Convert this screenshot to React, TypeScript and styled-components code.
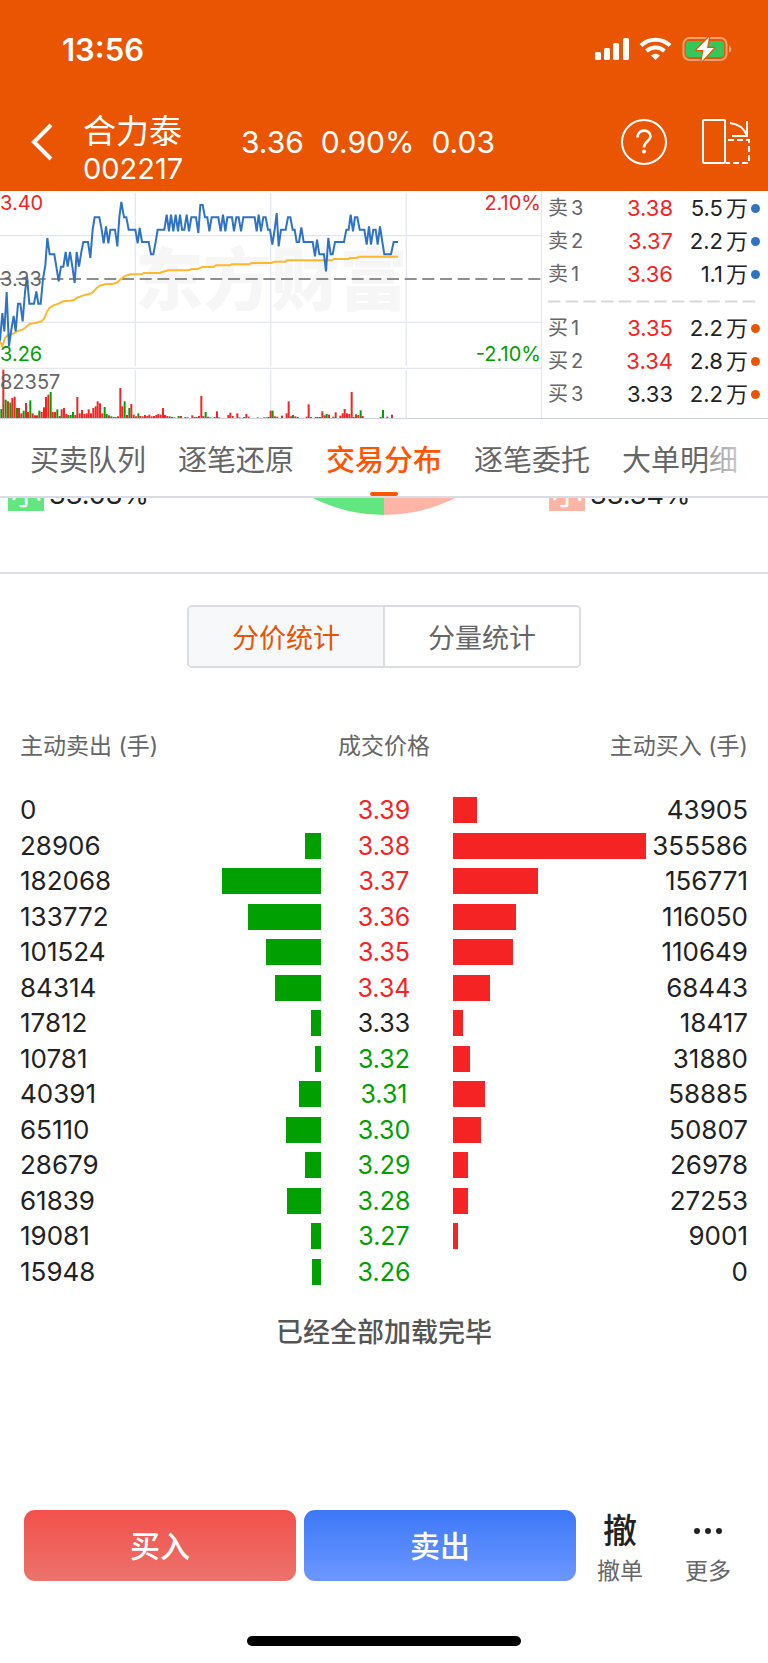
import React from "react";
import styled, { createGlobalStyle } from "styled-components";

const c = {
  brand: "#ea5504",
  active: "#ff5500",
  red: "#f52323",
  green: "#00a000",
  ink: "#222222",
  grey: "#666666",
  line: "#d9dce3",
  grid: "#e4e7ef",
  blue: "#2e73c4",
};

const Global = createGlobalStyle`
  * { box-sizing: border-box; }
  body {
    margin: 0;
    background: #ffffff;
    color: ${c.ink};
    font-family: Inter, "Noto Sans CJK SC", sans-serif;
  }
  button {
    font: inherit;
    color: inherit;
    border: 0;
    padding: 0;
    background: none;
    cursor: pointer;
  }
`;

const Page = styled.div`
  display: flex;
  flex-direction: column;
  min-height: 100vh;
  overflow: hidden;
`;

/* ---------- header ---------- */

const Header = styled.header`
  background: ${c.brand};
  color: #ffffff;
  height: 191px;
`;

const StatusBar = styled.div`
  display: flex;
  justify-content: space-between;
  align-items: center;
  height: 98px;
  padding: 0 36px 0 62px;
`;

const Clock = styled.time`
  font-size: 31px;
  font-weight: 600;
`;

const StatusIcons = styled.div`
  display: flex;
  align-items: center;
`;

const TitleBar = styled.div`
  display: flex;
  align-items: center;
  height: 88px;
  padding: 0 18px 0 30px;
`;

const BackButton = styled.button`
  display: flex;
  width: 53px;
`;

const StockName = styled.h1`
  display: flex;
  flex-direction: column;
  width: 158px;
  margin: 13px 0 0;
  font-weight: 400;
`;

const NameText = styled.span`
  font-size: 33px;
  line-height: 40px;
`;

const CodeText = styled.span`
  font-size: 29px;
  line-height: 36px;
`;

const Quote = styled.div`
  display: flex;
  flex: 1;
  gap: 17px;
  font-size: 30px;
`;

const HeaderActions = styled.div`
  display: flex;
  gap: 35px;
`;

const IconButton = styled.button`
  display: flex;
`;

/* ---------- chart and order book ---------- */

const Market = styled.section`
  display: flex;
  height: 228px;
  border-bottom: 1px solid #ced2da;
`;

const Chart = styled.div`
  position: relative;
  flex: 1;
  border-right: 1px solid ${c.grid};
`;

const ChartDrawing = styled.svg`
  position: absolute;
  inset: 0;
  width: 100%;
  height: 100%;
`;

const Watermark = styled.div`
  position: absolute;
  left: 25%;
  top: 53px;
  width: 50%;
  text-align: center;
  white-space: nowrap;
  font-size: 68px;
  line-height: 72px;
  font-weight: 900;
  color: #f6f6f6;
`;

const ChartLabel = styled.span<{ $top: number; $right?: boolean; $color: string }>`
  position: absolute;
  top: ${(p) => p.$top}px;
  ${(p) => (p.$right ? "right: 0;" : "left: 0;")}
  font-size: 20px;
  line-height: 24px;
  color: ${(p) => p.$color};
`;

const OrderBook = styled.div`
  width: 226px;
  padding: 0 8px 0 6px;
`;

const BookTable = styled.table`
  width: 100%;
  border-collapse: collapse;
  font-size: 22px;
  line-height: 33px;

  tbody + tbody::before {
    content: "";
    display: block;
    height: 21px;
  }
  th, td { padding: 0; text-align: right; font-weight: 400; }
  th { text-align: left; color: ${c.grey}; font-size: 20px; }
`;

const Pair = styled.span`
  display: inline-flex;
  gap: 3px;
`;

const BookWrap = styled.div`
  position: relative;
  padding-top: 1px;
`;

const BookDivider = styled.svg`
  position: absolute;
  left: 0;
  top: 109px;
  width: 208px;
  height: 3px;
`;

const BookPrice = styled.td<{ $color: string }>`
  width: 72px;
  color: ${(p) => p.$color};
`;

const BookVolume = styled.td`
  width: 75px;
`;

const DotCell = styled.td`
  width: 12px;
`;

const Dot = styled.i<{ $color: string }>`
  display: block;
  width: 9px;
  height: 9px;
  margin-left: auto;
  border-radius: 50%;
  background: ${(p) => p.$color};
`;

/* ---------- tabs ---------- */

const Tabs = styled.nav`
  position: relative;
  display: flex;
  gap: 32px;
  height: 79px;
  padding: 0 0 0 30px;
  overflow: hidden;
  border-bottom: 2px solid ${c.line};

  &::after {
    content: "";
    position: absolute;
    top: 0;
    right: 0;
    width: 60px;
    height: 100%;
    background: linear-gradient(to right, rgba(255, 255, 255, 0.3), #ffffff);
  }
`;

const Tab = styled.button<{ $active?: boolean }>`
  position: relative;
  flex: none;
  font-size: 29px;
  white-space: nowrap;
  color: ${(p) => (p.$active ? c.active : c.grey)};
  font-weight: ${(p) => (p.$active ? 500 : 400)};

  &::after {
    content: "";
    display: ${(p) => (p.$active ? "block" : "none")};
    position: absolute;
    bottom: 0;
    left: 50%;
    width: 28px;
    height: 4px;
    margin-left: -14px;
    border-radius: 2px;
    background: ${c.active};
  }
`;

/* ---------- share summary, scrolled under the tabs ---------- */

const Summary = styled.section`
  height: 76px;
  overflow: hidden;
  border-bottom: 2px solid ${c.line};
`;

const SummaryRow = styled.div`
  display: grid;
  grid-template-columns: 1fr 314px 1fr;
  align-items: end;
  height: 314px;
  margin-top: -297px;
`;

const Share = styled.div`
  display: flex;
  align-items: flex-end;
  gap: 5px;
  padding: 0 0 4px 8px;
  font-size: 27px;
  line-height: 33px;
`;

const SizeBadge = styled.span<{ $color: string }>`
  width: 36px;
  height: 36px;
  background: ${(p) => p.$color};
  color: #ffffff;
  font-size: 30px;
  line-height: 36px;
  text-align: center;
`;

const Pie = styled.svg`
  width: 314px;
  height: 314px;
`;

/* ---------- distribution ---------- */

const Segmented = styled.div`
  display: flex;
  width: 394px;
  height: 63px;
  margin: 31px auto 0;
  border: 2px solid ${c.line};
  border-radius: 5px;
  overflow: hidden;
`;

const Segment = styled.button<{ $active?: boolean }>`
  flex: 1;
  font-size: 27px;
  color: ${(p) => (p.$active ? c.brand : c.grey)};
  background: ${(p) => (p.$active ? "#f6f8fa" : "#ffffff")};

  & + & { border-left: 2px solid ${c.line}; }
`;

const Distribution = styled.table`
  width: calc(100% - 40px);
  margin: 61px 20px 0;
  table-layout: fixed;
  border-collapse: collapse;
  font-size: 26px;

  th, td { padding: 0; font-weight: 400; white-space: nowrap; }
  th { font-size: 23px; color: ${c.grey}; line-height: 34px; padding-bottom: 29px; }
  tbody tr:nth-child(odd) { height: 36px; }
  tbody tr:nth-child(even) { height: 35px; }
  tbody td { line-height: 32px; }
`;

const Cell = styled.td<{ $align: "left" | "right" }>`
  text-align: ${(p) => p.$align};
`;

const HeadCell = styled.th<{ $align: "left" | "center" | "right" }>`
  text-align: ${(p) => p.$align};
  && { padding-right: ${(p) => (p.$align === "center" ? 6 : 0)}px; }
`;

const PriceCell = styled.td<{ $color: string }>`
  color: ${(p) => p.$color};
  font-size: 25px;
  text-align: center;
  && { padding-right: 6px; }
`;

const Bar = styled.div<{ $sell?: boolean }>`
  height: 26px;
  margin-left: ${(p) => (p.$sell ? "auto" : "0")};
  background: ${(p) => (p.$sell ? c.green : c.red)};
`;

const EndNote = styled.p`
  margin: 24px 0 0;
  text-align: center;
  font-size: 27px;
  line-height: 40px;
  font-weight: 500;
  color: #555555;
`;

/* ---------- bottom bar ---------- */

const Footer = styled.footer`
  margin-top: auto;
`;

const Actions = styled.div`
  display: flex;
  align-items: flex-start;
  gap: 8px;
  padding: 0 24px;
`;

const TradeButton = styled.button<{ $from: string; $to: string }>`
  flex: 1;
  height: 71px;
  padding-bottom: 3px;
  border-radius: 11px;
  background: linear-gradient(${(p) => p.$from}, ${(p) => p.$to});
  color: #ffffff;
  font-size: 30px;
  font-weight: 500;
`;

const SmallActions = styled.div`
  display: flex;
  gap: 16px;
`;

const SmallAction = styled.button`
  display: flex;
  flex-direction: column;
  align-items: center;
  width: 72px;
  font-size: 23px;
  line-height: 30px;
  color: ${c.grey};
`;

const ActionGlyph = styled.span`
  display: flex;
  align-items: center;
  height: 46px;
  padding-bottom: 4px;
  font-size: 34px;
  font-weight: 500;
  color: ${c.ink};
`;

const HomeIndicator = styled.div`
  width: 274px;
  height: 10px;
  margin: 50px auto 17px;
  border-radius: 5px;
  background: #000000;
`;

/* ---------- data ---------- */

const priceLine =
  "0,458 7,375 13,430 20,312 27,475 34,425 41,384 47,430 54,347 61,347 68,400 75,312 81,265 88,347 102,347 109,310 115,347 122,347 129,273 136,232 142,150 149,199 163,199 169,236 176,280 183,236 190,236 197,192 203,236 210,192 217,236 224,285 230,192 237,236 244,192 250,162 264,162 271,210 278,125 284,88 298,88 305,125 311,166 318,115 325,166 331,125 345,125 352,175 358,88 364,42 372,88 379,88 386,125 406,125 413,166 419,120 426,162 446,162 453,199 460,199 467,162 473,125 493,125 500,80 507,130 513,80 520,130 527,80 534,130 540,80 546,125 553,125 560,80 567,130 574,88 588,88 595,135 601,51 608,51 615,88 622,88 628,130 635,88 655,88 662,130 669,80 676,130 682,88 696,88 702,130 709,88 716,88 723,130 730,88 764,88 770,130 776,80 783,130 790,88 797,88 804,125 810,125 817,170 824,125 830,75 836,175 843,125 857,125 864,88 871,88 878,125 884,125 890,162 897,162 904,118 911,162 938,162 945,205 951,155 958,199 972,199 978,250 985,150 992,199 998,199 1005,162 1032,162 1039,125 1046,125 1052,80 1059,130 1065,88 1072,88 1079,125 1093,125 1100,170 1107,115 1113,170 1120,125 1127,125 1133,170 1140,115 1147,162 1153,199 1173,199 1181,162 1194,162";

const averageLine =
  "0,460 7,475 15,450 25,440 40,437 55,428 68,425 90,407 105,405 125,400 133,390 140,373 148,360 160,352 176,347 190,340 210,338 222,336 230,330 250,322 275,316 290,300 300,293 318,288 338,288 352,283 362,273 372,266 390,259 425,259 432,255 480,255 487,252 505,247 565,247 575,243 595,243 605,237 640,237 648,232 690,232 695,229 748,229 755,225 815,225 822,221 855,221 862,217 995,217 1002,213 1045,213 1050,210 1070,210 1078,206 1194,206";

/* x:height, with a trailing g for minutes that closed down */
const volumes =
  "4:27g 10:145 17:55g 24:50 31:46g 37:60 44:64 51:30g 57:30 64:14 71:22g 78:45 84:18 91:53g 98:14 105:8 111:8 118:22g 125:18 132:32 138:63 145:70 152:78g 158:18 165:18 172:26g 179:6g 185:26 192:30 199:12 205:9g 212:9g 219:18g 226:9 232:63 239:14 246:24 253:12 260:14 266:26 273:14 280:30 287:35 293:50 300:44 307:14 314:33g 320:12g 327:8 334:5g 341:3 347:3 354:5 361:90 367:35 374:50g 381:9 388:30g 394:42 401:10 408:5 415:14g 421:6 428:5 435:9 442:6 448:10 455:5 462:6 469:9 475:12 482:10 489:30 495:9 502:6 509:5g 516:3g 523:2 536:6g 543:6 556:3 563:2 577:8 584:3 590:3 597:6 604:66 610:6 617:18g 624:4 631:2 644:3 651:20 658:2 685:9 691:16 698:6 712:14 719:2 732:3 739:12 746:4 773:2g 793:2 800:2 806:3g 812:22 818:22g 825:5 832:4 846:7 860:14 866:50 873:5 879:9g 886:5 893:3g 920:4 926:41 933:3 947:3g 953:3 960:3 967:20 974:8 980:12g 987:10 1000:4 1007:17 1021:7 1028:14 1034:27 1041:14 1048:12 1055:78 1061:3 1068:11 1075:9 1082:23g 1088:6 1142:3g 1149:24g 1162:4 1176:10"
    .split(" ")
    .map((item) => {
      const [x, h] = item.split(":");
      return { x: Number(x), h: parseInt(h, 10), down: h.endsWith("g") };
    });

const asks = [
  ["卖", "3", "3.38", "5.5"],
  ["卖", "2", "3.37", "2.2"],
  ["卖", "1", "3.36", "1.1"],
];
const bids = [
  ["买", "1", "3.35", "2.2"],
  ["买", "2", "3.34", "2.8"],
  ["买", "3", "3.33", "2.2"],
];

const tabs = ["买卖队列", "逐笔还原", "交易分布", "逐笔委托", "大单明细"];

const rows: [number, string, number][] = [
  [0, "3.39", 43905],
  [28906, "3.38", 355586],
  [182068, "3.37", 156771],
  [133772, "3.36", 116050],
  [101524, "3.35", 110649],
  [84314, "3.34", 68443],
  [17812, "3.33", 18417],
  [10781, "3.32", 31880],
  [40391, "3.31", 58885],
  [65110, "3.30", 50807],
  [28679, "3.29", 26978],
  [61839, "3.28", 27253],
  [19081, "3.27", 9001],
  [15948, "3.26", 0],
];

const maxVolume = Math.max(...rows.flatMap(([sell, , buy]) => [sell, buy]));
const share = (v: number) => `${(v / maxVolume) * 100}%`;

const priceColor = (price: string) => {
  const p = Number(price);
  return p > 3.33 ? c.red : p < 3.33 ? c.green : c.ink;
};

/* ---------- parts ---------- */

const SystemIcons = () => (
  <svg width="137" height="28" viewBox="0 0 137 28" fill="#ffffff" role="img" aria-label="信号、无线网络、充电中">
    <rect x="0" y="17" width="6" height="8" rx="1.5" />
    <rect x="9" y="13" width="6" height="12" rx="1.5" />
    <rect x="18" y="8" width="6" height="17" rx="1.5" />
    <rect x="28" y="3" width="6" height="22" rx="1.5" />
    <g fill="none" stroke="#ffffff" strokeWidth="4">
      <path d="M46 10.5 A21 21 0 0 1 75 10.5" />
      <path d="M51.5 16 A13 13 0 0 1 69.5 16" />
    </g>
    <path d="M56 20.5 A7 7 0 0 1 65 20.5 L60.5 25 Z" />
    <rect x="88.5" y="3" width="43" height="22" rx="6" fill="none" stroke="#ffffff" strokeOpacity="0.45" strokeWidth="2" />
    <rect x="91" y="6" width="38" height="16" rx="3" fill="#34c759" />
    <path d="M134 10.5 C137 11.5 137 16.5 134 17.5 Z" fillOpacity="0.5" />
    <path
      d="M114 2 L101.5 15 H108.5 L106.5 26.5 L119 13 H112 Z"
      stroke={c.brand}
      strokeWidth="2.4"
      paintOrder="stroke"
      strokeLinejoin="round"
    />
  </svg>
);

const BackIcon = () => (
  <svg width="24" height="38" viewBox="0 0 24 38" fill="none" stroke="#ffffff" strokeWidth="4">
    <path d="M21 2 L4 19 L21 36" />
  </svg>
);

const HelpIcon = () => (
  <svg width="46" height="46" viewBox="0 0 46 46" fill="none" stroke="#ffffff" strokeWidth="2">
    <circle cx="23" cy="23" r="22" />
    <path d="M16.5 18.5 C16.5 9.5 29.5 9.5 29.5 17.5 C29.5 22.5 23 22 23 28.5" strokeWidth="2.6" />
    <circle cx="23" cy="32.5" r="2" fill="#ffffff" stroke="none" />
  </svg>
);

const RotateIcon = () => (
  <svg width="48" height="46" viewBox="0 0 48 46" fill="none" stroke="#ffffff" strokeWidth="2">
    <rect x="1" y="1" width="22" height="43" rx="1" />
    <path d="M28 4 C36 5 42 9 44.5 16" />
    <path d="M45 2 V17 H30" />
    <path d="M26 21 H47 V44 H24" strokeDasharray="6 3" />
  </svg>
);

const BookSide = ({ data, dot }: { data: string[][]; dot: string }) => (
  <tbody>
    {data.map(([side, level, price, volume]) => (
      <tr key={level}>
        <th scope="row"><Pair><span>{side}</span><span>{level}</span></Pair></th>
        <BookPrice $color={priceColor(price)}>{price}</BookPrice>
        <BookVolume><Pair><span>{volume}</span><span>万</span></Pair></BookVolume>
        <DotCell><Dot $color={dot} /></DotCell>
      </tr>
    ))}
  </tbody>
);

const IntradayChart = () => (
  <Chart>
    <Watermark aria-hidden>东方财富</Watermark>
    <ChartDrawing viewBox="0 9 1623 681" preserveAspectRatio="none" fill="none">
      <g stroke={c.grid} strokeWidth="4">
        <path d="M0 143 H1623 M0 403 H1623 M0 541 H1623" />
        <path d="M406 14 V534 M406 546 V690 M812 14 V534 M812 546 V690 M1219 14 V534 M1219 546 V690" />
      </g>
      <path d="M-5 273 H1623" stroke="#6a6a6a" strokeWidth="4" strokeDasharray="36 17" />
      {volumes.map((v) => (
        <rect key={v.x} x={v.x - 3} y={690 - v.h} width="6" height={v.h} fill={v.down ? c.green : c.red} />
      ))}
      <polyline points={averageLine} stroke="#ffb72e" strokeWidth="6" />
      <polyline points={priceLine} stroke={c.blue} strokeWidth="6" />
    </ChartDrawing>
    <ChartLabel $top={0} $color={c.red}>3.40</ChartLabel>
    <ChartLabel $top={76} $color={c.grey}>3.33</ChartLabel>
    <ChartLabel $top={151} $color={c.green}>3.26</ChartLabel>
    <ChartLabel $top={179} $color={c.grey}>82357</ChartLabel>
    <ChartLabel $top={0} $right $color={c.red}>2.10%</ChartLabel>
    <ChartLabel $top={151} $right $color={c.green}>-2.10%</ChartLabel>
  </Chart>
);

export default function App() {
  return (
    <>
      <Global />
      <Page>
        <Header>
          <StatusBar>
            <Clock>13:56</Clock>
            <StatusIcons><SystemIcons /></StatusIcons>
          </StatusBar>
          <TitleBar>
            <BackButton aria-label="返回"><BackIcon /></BackButton>
            <StockName>
              <NameText>合力泰</NameText>
              <CodeText>002217</CodeText>
            </StockName>
            <Quote>
              <span>3.36</span>
              <span>0.90%</span>
              <span>0.03</span>
            </Quote>
            <HeaderActions>
              <IconButton aria-label="帮助"><HelpIcon /></IconButton>
              <IconButton aria-label="横屏"><RotateIcon /></IconButton>
            </HeaderActions>
          </TitleBar>
        </Header>

        <Market>
          <IntradayChart />
          <OrderBook>
            <BookWrap>
              <BookTable>
                <BookSide data={asks} dot={c.blue} />
                <BookSide data={bids} dot={c.brand} />
              </BookTable>
              <BookDivider>
                <path d="M0 1.5 H208" stroke="#d5d9de" strokeWidth="2" strokeDasharray="12.5 5.2" />
              </BookDivider>
            </BookWrap>
          </OrderBook>
        </Market>

        <Tabs>
          {tabs.map((t) => (
            <Tab key={t} $active={t === "交易分布"}>{t}</Tab>
          ))}
        </Tabs>

        <Summary>
          <SummaryRow>
            <Share><SizeBadge $color="#62e67f">小</SizeBadge>33.08%</Share>
            <Pie viewBox="0 0 314 314">
              <path d="M157 0 A157 157 0 0 0 157 314 Z" fill="#62e67f" />
              <path d="M157 0 A157 157 0 0 1 157 314 Z" fill="#ffb5a5" />
            </Pie>
            <Share><SizeBadge $color="#ffb5a5">小</SizeBadge>33.34%</Share>
          </SummaryRow>
        </Summary>

        <Segmented>
          <Segment $active>分价统计</Segment>
          <Segment>分量统计</Segment>
        </Segmented>

        <Distribution>
          <colgroup>
            <col width="108" />
            <col />
            <col width="132" />
            <col />
            <col width="102" />
          </colgroup>
          <thead>
            <tr>
              <HeadCell $align="left" colSpan={2}>主动卖出 (手)</HeadCell>
              <HeadCell $align="center">成交价格</HeadCell>
              <HeadCell $align="right" colSpan={2}>主动买入 (手)</HeadCell>
            </tr>
          </thead>
          <tbody>
            {rows.map(([sell, price, buy]) => (
              <tr key={price}>
                <Cell $align="left">{sell}</Cell>
                <td><Bar $sell style={{ width: share(sell) }} /></td>
                <PriceCell $color={priceColor(price)}>{price}</PriceCell>
                <td><Bar style={{ width: share(buy) }} /></td>
                <Cell $align="right">{buy}</Cell>
              </tr>
            ))}
          </tbody>
        </Distribution>
        <EndNote>已经全部加载完毕</EndNote>

        <Footer>
          <Actions>
            <TradeButton $from="#f3504b" $to="#ec736c">买入</TradeButton>
            <TradeButton $from="#3d78f8" $to="#6c97ff">卖出</TradeButton>
            <SmallActions>
              <SmallAction>
                <ActionGlyph>撤</ActionGlyph>
                撤单
              </SmallAction>
              <SmallAction>
                <ActionGlyph>
                  <svg width="30" height="8" viewBox="0 0 30 8" fill={c.ink}>
                    <circle cx="4" cy="4" r="3" />
                    <circle cx="15" cy="4" r="3" />
                    <circle cx="26" cy="4" r="3" />
                  </svg>
                </ActionGlyph>
                更多
              </SmallAction>
            </SmallActions>
          </Actions>
          <HomeIndicator />
        </Footer>
      </Page>
    </>
  );
}
